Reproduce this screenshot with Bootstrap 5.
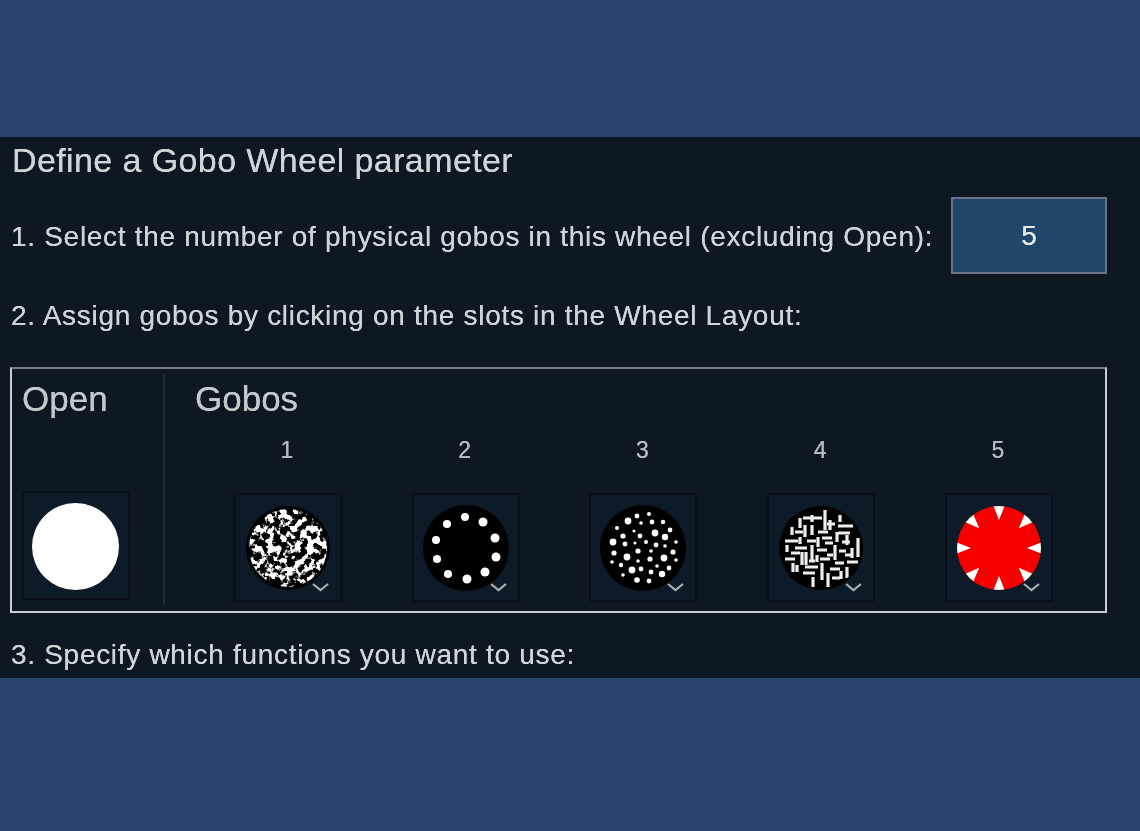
<!DOCTYPE html>
<html lang="en">
<head>
<meta charset="utf-8">
<title>Define a Gobo Wheel parameter</title>
<link href="https://cdn.jsdelivr.net/npm/bootstrap@5.3.0/dist/css/bootstrap.min.css" rel="stylesheet">
<style>
html,body{height:100%}
body{background:#2c4570;padding-top:137px;font-family:"Liberation Sans",Arial,sans-serif;color:#d0d4d7;overflow:hidden}
.gobo-panel{background:#0d1823;height:541px;padding:0 33px 0 10px;filter:blur(.55px);text-shadow:0 0 .6px currentColor}
.gobo-title{font-size:34px;line-height:46px;height:46px;padding-left:2px;letter-spacing:.4px}
.gobo-line{font-size:28px;line-height:42px;height:40px;letter-spacing:.7px;padding-left:1px;white-space:nowrap}
.gobo-row1{margin-top:14px;height:77px}
.gobo-count{width:156px;height:77px;background:#20466a;border:2px solid #6b7286;color:#e6e9ea;font-size:28px}
.gobo-l2{margin-top:21px}
.gobo-box{margin-top:32px;height:246px;border:2px solid;border-color:#7b7f84 #c9cdd0 #c9cdd0 #c9cdd0}
.gobo-open{width:151px;padding:10px 0 0 10px}
.gobo-sep{width:2px;margin:5px 0 6px;background:#222b38}
.gobo-main{padding:10px 0 0 30px}
.gobo-head{font-size:35px;line-height:40px;height:40px;color:#c4c8cb}
.gobo-cols{display:grid;grid-template-columns:repeat(5,177.75px);margin:17px 0 0 4px}
.gobo-num{font-size:23px;line-height:28px;height:28px;color:#b8bcc0;text-align:center;padding-right:2px}
.gobo-slot{display:block;width:108px;height:109px;background:#0d1a27;border:2px solid #0a1019;box-sizing:border-box}
.gobo-cell{display:flex;justify-content:center;margin-top:29px}
.gobo-gap-open{height:72px}
.gobo-l3{margin-top:21px}
</style>
</head>
<body>
<div class="gobo-panel">
  <div class="gobo-title">Define a Gobo Wheel parameter</div>
  <div class="d-flex align-items-center justify-content-between gobo-row1">
    <div class="gobo-line">1. Select the number of physical gobos in this wheel (excluding Open):</div>
    <div class="gobo-count d-flex align-items-center justify-content-center">5</div>
  </div>
  <div class="gobo-line gobo-l2">2. Assign gobos by clicking on the slots in the Wheel Layout:</div>
  <div class="gobo-box d-flex">
    <div class="gobo-open">
      <div class="gobo-head">Open</div>
      <div class="gobo-gap-open"></div>
      <svg class="gobo-slot" viewBox="2 2 104 105"><circle cx="53.5" cy="55.5" r="43.5" fill="#fff"/></svg>
    </div>
    <div class="gobo-sep"></div>
    <div class="gobo-main flex-grow-1">
      <div class="gobo-head">Gobos</div>
      <div class="gobo-cols">
        <div>
          <div class="gobo-num">1</div>
          <div class="gobo-cell">
            <svg class="gobo-slot" viewBox="2 2 104 105">
              <defs>
                <clipPath id="cp1"><circle cx="54" cy="55" r="39"/></clipPath>
                <filter id="speck" x="0" y="0" width="100%" height="100%">
                  <feTurbulence type="fractalNoise" baseFrequency=".15" numOctaves="3" seed="7"/>
                  <feColorMatrix values="0 0 0 0 1  0 0 0 0 1  0 0 0 0 1  10 0 0 0 -4.6"/>
                </filter>
              </defs>
              <circle cx="54" cy="55" r="42" fill="#000"/>
              <g clip-path="url(#cp1)"><rect width="108" height="109" filter="url(#speck)"/></g>
              <path d="M79 91l7.5 6 7.5-6" fill="none" stroke="#aab0b6" stroke-width="2.2"/>
            </svg>
          </div>
        </div>
        <div>
          <div class="gobo-num">2</div>
          <div class="gobo-cell">
            <svg class="gobo-slot" viewBox="2 2 104 105">
              <circle cx="54" cy="55" r="43" fill="#000"/>
              <g fill="#fff"><circle cx="53" cy="24" r="4"/><circle cx="35" cy="31" r="4"/><circle cx="71" cy="29" r="4.5"/><circle cx="24" cy="47" r="4"/><circle cx="83" cy="45" r="4.5"/><circle cx="25" cy="66" r="4"/><circle cx="84" cy="64" r="4.5"/><circle cx="36" cy="81" r="4"/><circle cx="55" cy="86" r="4.5"/><circle cx="73" cy="79" r="4.5"/></g>
              <path d="M79 91l7.5 6 7.5-6" fill="none" stroke="#aab0b6" stroke-width="2.2"/>
            </svg>
          </div>
        </div>
        <div>
          <div class="gobo-num">3</div>
          <div class="gobo-cell">
            <svg class="gobo-slot" viewBox="2 2 104 105">
              <circle cx="54" cy="55" r="43" fill="#000"/>
              <g fill="#fff">
                <circle cx="48" cy="23" r="2.4"/><circle cx="60" cy="21" r="2"/><circle cx="39" cy="28" r="3.4"/><circle cx="52" cy="30" r="1.8"/><circle cx="63" cy="29" r="2.4"/><circle cx="74" cy="29" r="2.2"/><circle cx="28" cy="35" r="2"/><circle cx="45" cy="38" r="1.6"/><circle cx="81" cy="37" r="2.4"/><circle cx="34" cy="43" r="2.6"/><circle cx="51" cy="43" r="2.4"/><circle cx="66" cy="40" r="3.4"/><circle cx="76" cy="44" r="3.2"/><circle cx="24" cy="49" r="3.4"/><circle cx="36" cy="51" r="2.4"/><circle cx="46" cy="50" r="1.6"/><circle cx="57" cy="49" r="2"/><circle cx="67" cy="52" r="2.4"/><circle cx="76" cy="53" r="1.8"/><circle cx="87" cy="49" r="1.8"/><circle cx="25" cy="60" r="2.6"/><circle cx="49" cy="58" r="2.6"/><circle cx="62" cy="58" r="1.8"/><circle cx="84" cy="59" r="2.6"/><circle cx="38" cy="64" r="3.4"/><circle cx="75" cy="65" r="3.4"/><circle cx="23" cy="69" r="1.8"/><circle cx="49" cy="68" r="1.8"/><circle cx="61" cy="66" r="2.6"/><circle cx="87" cy="67" r="1.8"/><circle cx="32" cy="72" r="2.2"/><circle cx="68" cy="73" r="1.8"/><circle cx="80" cy="75" r="2.4"/><circle cx="43" cy="77" r="3.4"/><circle cx="52" cy="76" r="2.4"/><circle cx="62" cy="79" r="2.4"/><circle cx="73" cy="81" r="3.2"/><circle cx="34" cy="82" r="1.8"/><circle cx="48" cy="87" r="2.8"/><circle cx="60" cy="88" r="2.4"/>
              </g>
              <path d="M79 91l7.5 6 7.5-6" fill="none" stroke="#aab0b6" stroke-width="2.2"/>
            </svg>
          </div>
        </div>
        <div>
          <div class="gobo-num">4</div>
          <div class="gobo-cell">
            <svg class="gobo-slot" viewBox="2 2 104 105">
              <defs><clipPath id="cp4"><circle cx="54" cy="55" r="40"/></clipPath></defs>
              <circle cx="54" cy="55" r="42" fill="#000"/>
              <path clip-path="url(#cp4)" fill="none" stroke="#eeeeee" stroke-width="3.2" d="M36 25h19M71 33h15M28 39h8M51 39h10M71 40h12M18 48h13M55 45h10M75 49h8M28 55h12M50 57h10M78 62h8M18 66h10M53 66h10M80 69h11M38 74h13M63 76h10M36 80h12M65 85h8M60 31h8M40 48h9M58 50h8M24 60h9M60 62h6M72 58h7M42 68h6M68 70h9M58 17v20M45 22v7M33 25v10M45 32v10M63 27v10M73 22v7M25 34v8M38 32v12M70 39v10M51 44v10M33 44v7M80 42v10M91 45v19M20 52v7M45 52v15M35 59v13M39 59v13M68 52v15M85 55v10M50 62v7M26 70v9M55 70v17M80 74v11M46 84v10M61 80v14M30 72v7M74 78v8"/>
              <path d="M79 91l7.5 6 7.5-6" fill="none" stroke="#aab0b6" stroke-width="2.2"/>
            </svg>
          </div>
        </div>
        <div>
          <div class="gobo-num">5</div>
          <div class="gobo-cell">
            <svg class="gobo-slot" viewBox="2 2 104 105">
              <defs><clipPath id="cp5"><circle cx="54" cy="55" r="42"/></clipPath></defs>
              <circle cx="54" cy="55" r="42" fill="#f60000"/>
              <g clip-path="url(#cp5)" fill="#fff">
                <polygon points="48,12 60,12 54,27"/>
                <polygon points="48,12 60,12 54,27" transform="rotate(45 54 55)"/>
                <polygon points="48,12 60,12 54,27" transform="rotate(90 54 55)"/>
                <polygon points="48,12 60,12 54,27" transform="rotate(135 54 55)"/>
                <polygon points="48,12 60,12 54,27" transform="rotate(180 54 55)"/>
                <polygon points="48,12 60,12 54,27" transform="rotate(225 54 55)"/>
                <polygon points="48,12 60,12 54,27" transform="rotate(270 54 55)"/>
                <polygon points="48,12 60,12 54,27" transform="rotate(315 54 55)"/>
              </g>
              <path d="M79 91l7.5 6 7.5-6" fill="none" stroke="#aab0b6" stroke-width="2.2"/>
            </svg>
          </div>
        </div>
      </div>
    </div>
  </div>
  <div class="gobo-line gobo-l3">3. Specify which functions you want to use:</div>
</div>
<script src="https://cdn.jsdelivr.net/npm/bootstrap@5.3.0/dist/js/bootstrap.bundle.min.js"></script>
</body>
</html>
